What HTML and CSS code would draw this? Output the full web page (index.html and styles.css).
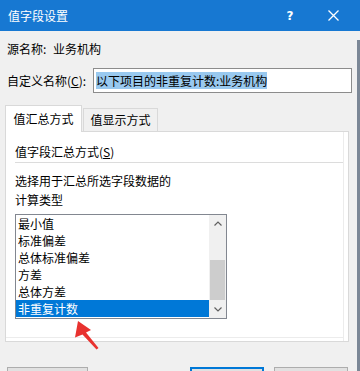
FILE: index.html
```html
<!DOCTYPE html>
<html lang="zh-CN">
<head>
    <meta charset="UTF-8">
    <title>值字段设置</title>
    <link rel="stylesheet" href="styles.css">
</head>
<body>
    <div class="dialog">
        <div class="titlebar">
            <span class="title">值字段设置</span>
            <span class="help">?</span>
            <span class="close">
                <svg width="11" height="11" viewBox="0 0 11 11"><path d="M0.5 0.5L10.5 10.5M10.5 0.5L0.5 10.5" stroke="#fff" stroke-width="1.3"/></svg>
            </span>
        </div>
        <div class="body">
            <div class="source-row">
                <span class="source-label">源名称:</span>
                <span>业务机构</span>
            </div>
            <div class="custom-row">
                <label class="custom-label">自定义名称(<u>C</u>):</label>
                <div class="text-input"><span class="selected-text">以下项目的非重复计数:业务机构</span></div>
            </div>
            <div class="tabs">
                <div class="tab active">值汇总方式</div>
                <div class="tab">值显示方式</div>
            </div>
            <div class="panel">
                <div class="group-title">值字段汇总方式(<u>S</u>)</div>
                <p class="hint">选择用于汇总所选字段数据的<br>计算类型</p>
                <div class="listbox">
                    <ul class="items">
                        <li>最小值</li>
                        <li>标准偏差</li>
                        <li>总体标准偏差</li>
                        <li>方差</li>
                        <li>总体方差</li>
                        <li class="selected">非重复计数</li>
                    </ul>
                    <div class="scrollbar">
                        <div class="sb-btn">
                            <svg width="8" height="5" viewBox="0 0 8 5"><path d="M0.5 4.5L4 1L7.5 4.5" fill="none" stroke="#606060" stroke-width="1.2"/></svg>
                        </div>
                        <div class="sb-track"><div class="sb-thumb"></div></div>
                        <div class="sb-btn">
                            <svg width="8" height="5" viewBox="0 0 8 5"><path d="M0.5 0.5L4 4L7.5 0.5" fill="none" stroke="#606060" stroke-width="1.2"/></svg>
                        </div>
                    </div>
                </div>
            </div>
            <!-- only the top edge of the buttons is visible in the crop -->
            <div class="buttons">
                <button class="btn btn-wide" aria-label="数字格式"></button>
                <div class="btn-group">
                    <button class="btn default" aria-label="确定"></button>
                    <button class="btn" aria-label="取消"></button>
                </div>
            </div>
        </div>
        <!-- red pointer over the selected item -->
        <svg class="arrow" width="34" height="34" viewBox="0 0 34 34">
            <path d="M10 3L23 12L18 14.5L30.5 30L28.5 31.5L14.5 16.5L7 19.5Z" fill="#e8322f"/>
        </svg>
    </div>
</body>
</html>
```

FILE: styles.css
```css
body {
    margin: 0;
    font-family: "Noto Sans CJK SC", "Noto Sans", sans-serif;
    font-size: 12px;
    color: #000;
}
.dialog {
    position: relative;
    width: 360px;
    height: 371px;
    overflow: hidden;
    background-color: #f0f0f0;
}
.titlebar {
    height: 31px;
    display: flex;
    align-items: center;
    padding: 0 9px 0 8px;
    background-color: #1778d2;
    color: #fff;
}
.title {
    flex: 1;
    line-height: 17px;
}
.help {
    width: 20px;
    margin-right: 15px;
    text-align: center;
    font-family: "DejaVu Sans", sans-serif;
    font-size: 12px;
    font-weight: bold;
}
.close {
    width: 36px;
    display: flex;
    justify-content: center;
}
.body {
    height: 340px;
    box-sizing: border-box;
    border-right: 3px solid #7b8796;
}
.source-row {
    display: flex;
    margin: 9px 0 0 7px;
    line-height: 17px;
}
.source-label {
    width: 46px;
}
.custom-row {
    display: flex;
    align-items: center;
    margin: 11px 5px 0 7px;
    height: 25px;
}
.custom-label {
    width: 86px;
    line-height: 17px;
}
.text-input {
    flex: 1;
    height: 25px;
    box-sizing: border-box;
    border: 1px solid #8c8c8c;
    background-color: #fff;
    padding-left: 2px;
    display: flex;
    align-items: center;
}
.selected-text {
    background-color: #99c9ef;
    line-height: 17px;
}
.tabs {
    display: flex;
    align-items: flex-start;
    margin: 12px 0 0 5px;
    height: 26px;
}
.tab {
    box-sizing: border-box;
    height: 23px;
    margin-top: 3px;
    margin-left: 1px;
    width: 75px;
    border: 1px solid #d9d9d9;
    border-bottom: none;
    background-color: #f0f0f0;
    text-align: center;
    line-height: 22px;
}
.tab.active {
    position: relative;
    z-index: 1;
    height: 27px;
    width: 77px;
    margin: 0;
    background-color: #fff;
    line-height: 26px;
}
.panel {
    box-sizing: border-box;
    width: 344px;
    height: 211px;
    margin-left: 5px;
    padding: 11px 0 0 9px;
    border: 1px solid #d9d9d9;
    background-color: #fff;
    box-shadow: inset -4px 0 0 #fff, inset -5px 0 0 #ececec, inset 0 -3px 0 #fff, inset 0 -4px 0 #ececec;
}
.group-title {
    line-height: 17px;
    padding-bottom: 2px;
    margin-right: 5px;
    border-bottom: 1px solid #dcdcdc;
}
.hint {
    margin: 8px 0 0;
    line-height: 19px;
}
.listbox {
    display: flex;
    width: 212px;
    height: 105px;
    margin-top: 5px;
    box-sizing: border-box;
    border: 1px solid #828790;
    background-color: #fff;
}
.items {
    flex: 1;
    list-style: none;
    margin: 0;
    padding: 0;
}
.items li {
    height: 17px;
    line-height: 17px;
    padding-left: 2px;
}
.items li.selected {
    background-color: #0078d7;
    color: #fff;
}
.scrollbar {
    width: 17px;
    display: flex;
    flex-direction: column;
    background-color: #f0f0f0;
}
.sb-btn {
    height: 17px;
    display: flex;
    align-items: center;
    justify-content: center;
}
.sb-track {
    flex: 1;
    padding: 28px 1px 0;
}
.sb-thumb {
    height: 40px;
    background-color: #cdcdcd;
}
.buttons {
    display: flex;
    justify-content: space-between;
    margin: 25px 9px 0 7px;
}
.btn-group {
    display: flex;
    gap: 10px;
}
.btn {
    width: 74px;
    height: 23px;
    box-sizing: border-box;
    border: 1px solid #adadad;
    background-color: #e1e1e1;
    padding: 0;
}
.btn-wide {
    width: 81px;
}
.btn.default {
    border: 2px solid #0078d7;
}
.arrow {
    position: absolute;
    left: 68px;
    top: 318px;
}
```
